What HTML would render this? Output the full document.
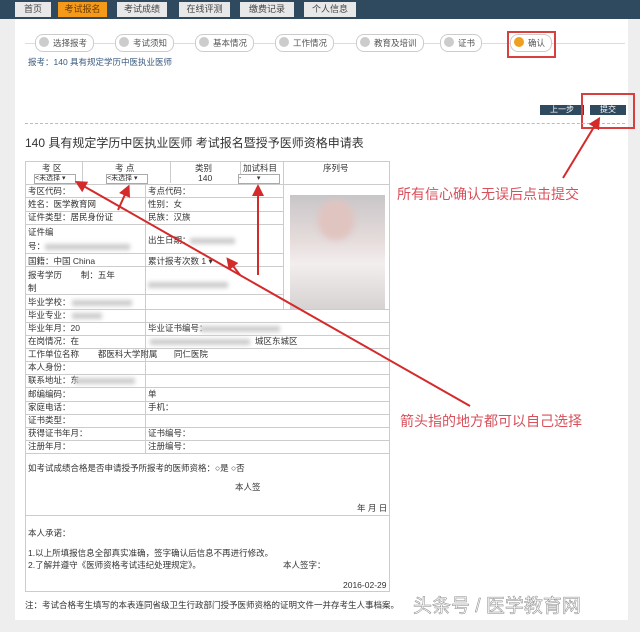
<!DOCTYPE html><html><head><meta charset="utf-8"><style>
body{margin:0;width:640px;height:632px;background:#eeeeef;position:relative;overflow:hidden;font-family:"Liberation Sans","Noto Sans CJK SC",sans-serif;color:#333}
.a{position:absolute}
.nav{left:0;top:0;width:640px;height:19px;background:#2f4a5f}
.tab{position:absolute;top:2px;height:15px;background:#e8e8e8;font-size:9px;line-height:15px;text-align:center;color:#444}
.main{left:15px;top:19px;width:613px;height:601px;background:#fff}
.step{position:absolute;top:34px;height:16px;border:1px solid #ccc;border-radius:8px;background:#fff;font-size:8.5px;line-height:16px;color:#555;padding:0 6px 0 3px}
.step i{display:inline-block;width:10px;height:10px;border-radius:5px;background:#ccc;vertical-align:-1px;margin-right:4px}
.t{font-size:8.5px;line-height:11px;color:#333;position:absolute;white-space:nowrap}
.hl{position:absolute;height:1px;background:#ccc}
.vl{position:absolute;width:1px;background:#ccc}
.blur{position:absolute;background:#ccc;filter:blur(2px);height:6px}
.sel{position:absolute;border:1px solid #aaa;height:8px;font-size:7px;line-height:8px;background:#fff}
.btn{position:absolute;background:#2f4a5f;color:#fff;font-size:8px;text-align:center;line-height:10px;height:10px}
</style></head><body>
<div class="a nav"></div>
<div class="tab" style="left:15px;width:36px">首页</div>
<div class="tab" style="left:58px;width:49px;background:#f39a1a;color:#6a3a00">考试报名</div>
<div class="tab" style="left:117px;width:50px">考试成绩</div>
<div class="tab" style="left:179px;width:51px">在线评测</div>
<div class="tab" style="left:240px;width:54px">缴费记录</div>
<div class="tab" style="left:304px;width:52px">个人信息</div>
<div class="a main"></div>
<div class="hl" style="left:25px;top:43px;width:600px;background:#ddd"></div>
<div class="step" style="left:35px"><i></i>选择报考</div>
<div class="step" style="left:115px"><i></i>考试须知</div>
<div class="step" style="left:195px"><i></i>基本情况</div>
<div class="step" style="left:275px"><i></i>工作情况</div>
<div class="step" style="left:356px"><i></i>教育及培训</div>
<div class="step" style="left:440px"><i></i>证书</div>
<div class="step" style="left:510px"><i style="background:#f0a020"></i>确认</div>
<div class="a" style="left:507px;top:31px;width:45px;height:23px;border:2px solid #d84040"></div>
<div class="t" style="left:28px;top:57px;color:#3a5a80">报考：140 具有规定学历中医执业医师</div>
<div class="btn" style="left:540px;top:105px;width:44px">上一步</div>
<div class="btn" style="left:590px;top:105px;width:36px">提交</div>
<div class="a" style="left:581px;top:93px;width:50px;height:32px;border:2px solid #d84040"></div>
<div class="a" style="left:25px;top:123px;width:600px;border-top:1px dashed #bbb"></div>
<div class="t" style="left:25px;top:136px;font-size:12px;line-height:14px;color:#333">140 具有规定学历中医执业医师 考试报名暨授予医师资格申请表</div>
<div class="vl" style="left:82px;top:161px;height:22px"></div>
<div class="vl" style="left:170px;top:161px;height:22px"></div>
<div class="vl" style="left:240px;top:161px;height:22px"></div>
<div class="vl" style="left:283px;top:161px;height:149px"></div>
<div class="vl" style="left:145px;top:183px;height:270px"></div>
<div class="t" style="left:42px;top:163px">考 区</div><div class="t" style="left:115px;top:163px">考 点</div>
<div class="t" style="left:195px;top:163px">类别</div><div class="t" style="left:243px;top:163px">加试科目</div><div class="t" style="left:323px;top:163px">序列号</div>
<div class="sel" style="left:34px;top:174px;width:40px">&lt;未选择 ▾</div>
<div class="sel" style="left:106px;top:174px;width:40px">&lt;未选择 ▾</div>
<div class="t" style="left:198px;top:173px">140</div>
<div class="sel" style="left:238px;top:174px;width:40px">-&nbsp;&nbsp;&nbsp;&nbsp;&nbsp;&nbsp;&nbsp;&nbsp;▾</div>
<div class="hl" style="left:25px;top:184px;width:365px"></div>
<div class="a" style="left:290px;top:195px;width:95px;height:115px;background:linear-gradient(#c9c6c8,#e6dcdc 40%,#f3eeee 60%,#d7d2d2)"></div>
<div class="a" style="left:318px;top:200px;width:36px;height:40px;border-radius:18px;background:#e0c4c0;filter:blur(3px)"></div>
<div class="t" style="left:28px;top:186px">考区代码：</div><div class="t" style="left:148px;top:186px">考点代码：</div>
<div class="hl" style="left:25px;top:197px;width:258px"></div>
<div class="t" style="left:28px;top:199px">姓名：医学教育网</div><div class="t" style="left:148px;top:199px">性别：女</div>
<div class="hl" style="left:25px;top:211px;width:258px"></div>
<div class="t" style="left:28px;top:212px">证件类型：居民身份证</div><div class="t" style="left:148px;top:212px">民族：汉族</div>
<div class="hl" style="left:25px;top:224px;width:258px"></div>
<div class="t" style="left:28px;top:227px">证件编</div><div class="t" style="left:28px;top:241px">号：</div><div class="blur" style="left:45px;top:244px;width:85px"></div>
<div class="t" style="left:148px;top:235px">出生日期：</div><div class="blur" style="left:190px;top:238px;width:45px"></div>
<div class="hl" style="left:25px;top:253px;width:258px"></div>
<div class="t" style="left:28px;top:256px">国籍：中国 China</div><div class="t" style="left:148px;top:256px">累计报考次数 1 ▾</div>
<div class="hl" style="left:25px;top:266px;width:258px"></div>
<div class="t" style="left:28px;top:270px">报考学历&nbsp;&nbsp;&nbsp;&nbsp;&nbsp;&nbsp;&nbsp;&nbsp;制：五年</div><div class="t" style="left:28px;top:283px">制</div><div class="blur" style="left:148px;top:282px;width:80px"></div>
<div class="hl" style="left:25px;top:294px;width:258px"></div>
<div class="t" style="left:28px;top:297px">毕业学校：</div><div class="blur" style="left:72px;top:300px;width:60px"></div>
<div class="hl" style="left:25px;top:309px;width:365px"></div>
<div class="t" style="left:28px;top:310px">毕业专业：</div><div class="blur" style="left:72px;top:313px;width:30px"></div>
<div class="hl" style="left:25px;top:322px;width:365px"></div>
<div class="t" style="left:28px;top:323px">毕业年月：20</div><div class="t" style="left:148px;top:323px">毕业证书编号：</div><div class="blur" style="left:200px;top:326px;width:80px"></div>
<div class="hl" style="left:25px;top:335px;width:365px"></div>
<div class="t" style="left:28px;top:336px">在岗情况：在</div><div class="blur" style="left:150px;top:339px;width:100px"></div><div class="t" style="left:255px;top:336px">城区东城区</div>
<div class="hl" style="left:25px;top:348px;width:365px"></div>
<div class="t" style="left:28px;top:349px">工作单位名称&nbsp;&nbsp;&nbsp;&nbsp;&nbsp;&nbsp;&nbsp;&nbsp;都医科大学附属&nbsp;&nbsp;&nbsp;&nbsp;&nbsp;&nbsp;&nbsp;同仁医院</div>
<div class="hl" style="left:25px;top:361px;width:365px"></div>
<div class="t" style="left:28px;top:362px">本人身份：</div>
<div class="hl" style="left:25px;top:374px;width:365px"></div>
<div class="t" style="left:28px;top:375px">联系地址：东</div><div class="blur" style="left:75px;top:378px;width:60px"></div>
<div class="hl" style="left:25px;top:387px;width:365px"></div>
<div class="t" style="left:28px;top:389px">邮编编码：</div><div class="t" style="left:148px;top:389px">单</div>
<div class="hl" style="left:25px;top:401px;width:365px"></div>
<div class="t" style="left:28px;top:402px">家庭电话：</div><div class="t" style="left:148px;top:402px">手机：</div>
<div class="hl" style="left:25px;top:414px;width:365px"></div>
<div class="t" style="left:28px;top:415px">证书类型：</div>
<div class="hl" style="left:25px;top:427px;width:365px"></div>
<div class="t" style="left:28px;top:428px">获得证书年月：</div><div class="t" style="left:148px;top:428px">证书编号：</div>
<div class="hl" style="left:25px;top:440px;width:365px"></div>
<div class="t" style="left:28px;top:441px">注册年月：</div><div class="t" style="left:148px;top:441px">注册编号：</div>
<div class="hl" style="left:25px;top:453px;width:365px"></div>
<div class="t" style="left:28px;top:463px">如考试成绩合格是否申请授予所报考的医师资格：○是 ○否</div>
<div class="t" style="left:235px;top:482px">本人签</div>
<div class="t" style="left:357px;top:503px">年 月 日</div>
<div class="hl" style="left:25px;top:515px;width:365px"></div>
<div class="t" style="left:28px;top:528px">本人承诺：</div>
<div class="t" style="left:28px;top:548px">1.以上所填报信息全部真实准确，签字确认后信息不再进行修改。</div>
<div class="t" style="left:28px;top:560px">2.了解并遵守《医师资格考试违纪处理规定》。</div>
<div class="t" style="left:283px;top:560px">本人签字：</div>
<div class="t" style="left:343px;top:580px">2016-02-29</div>
<div class="a" style="left:25px;top:161px;width:365px;height:431px;border:1px solid #ccc;box-sizing:border-box"></div>
<div class="t" style="left:25px;top:600px">注：考试合格考生填写的本表连同省级卫生行政部门授予医师资格的证明文件一并存考生人事档案。</div>
<div class="t" style="left:397px;top:186px;font-size:14px;line-height:16px;color:#d8505a">所有信心确认无误后点击提交</div>
<div class="t" style="left:400px;top:413px;font-size:14px;line-height:16px;color:#d8505a">箭头指的地方都可以自己选择</div>
<div class="t" style="left:413px;top:596px;font-size:19px;line-height:22px;color:#fafafa;-webkit-text-stroke:0.5px #888">头条号 / 医学教育网</div>
<svg class="a" style="left:0;top:0" width="640" height="632"><defs><marker id="m" markerWidth="6" markerHeight="6" refX="3" refY="3" orient="auto"><path d="M0,0L6,3L0,6z" fill="#d42a2a"/></marker></defs>
<g stroke="#d42a2a" stroke-width="2" fill="none" marker-end="url(#m)">
<line x1="470" y1="406" x2="80" y2="184"/><line x1="118" y1="210" x2="127" y2="190"/><line x1="258" y1="275" x2="258" y2="190"/><line x1="240" y1="275" x2="230" y2="262"/><line x1="563" y1="178" x2="597" y2="122"/></g></svg>
</body></html>
